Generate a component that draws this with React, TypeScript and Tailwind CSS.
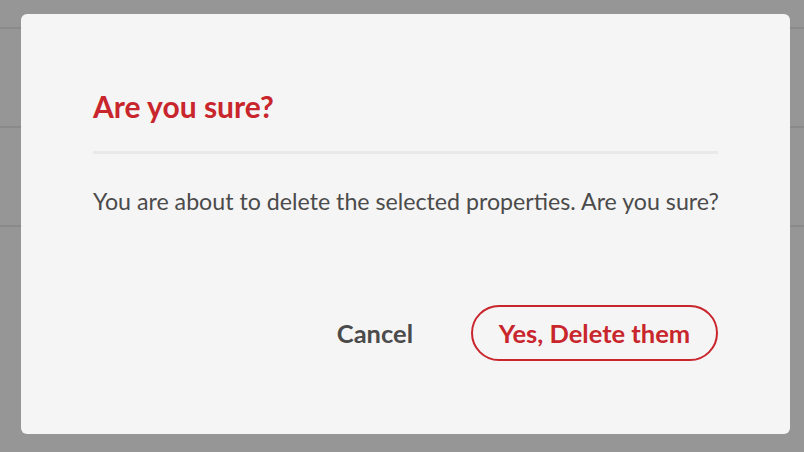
export default function App() {
  return (
    <div className="relative w-[804px] h-[452px] overflow-hidden bg-[#969696]" style={{ fontFamily: 'Lato, "Open Sans", sans-serif' }}>
      {/* page rows behind the overlay */}
      <div className="flex flex-col pt-[27px]">
        <div className="h-[99px] border-t-2 border-[#8a8a8a]"></div>
        <div className="h-[99px] border-t-2 border-[#8a8a8a]"></div>
        <div className="h-[99px] border-t-2 border-[#8a8a8a]"></div>
      </div>

      {/* Dialog */}
      <div className="absolute left-[21px] top-[14px] w-[769px] h-[420px] bg-[#f5f5f5] rounded-[6px] flex flex-col px-[72px] pt-[74px]">
        <h2 className="text-[30px] font-bold leading-[36px] text-[#c9252c]">Are you sure?</h2>
        <div className="mt-[27px] h-[3px] w-[625px] bg-[#e9e9e9]"></div>
        <p className="mt-[31px] text-[23.2px] leading-[32px] text-[#4b4b4b] whitespace-nowrap">
          You are about to delete the selected properties. Are you sure?
        </p>
        <div className="mt-[88px] flex items-center justify-end w-[625px]">
          <button className="px-[24px] h-[56px] text-[25.5px] font-bold text-[#4b4b4b]">Cancel</button>
          <button className="ml-[34px] h-[56px] w-[247px] rounded-full border-2 border-[#c9252c] text-[25.5px] font-bold text-[#c9252c]">
            Yes, Delete them
          </button>
        </div>
      </div>
    </div>
  );
}
